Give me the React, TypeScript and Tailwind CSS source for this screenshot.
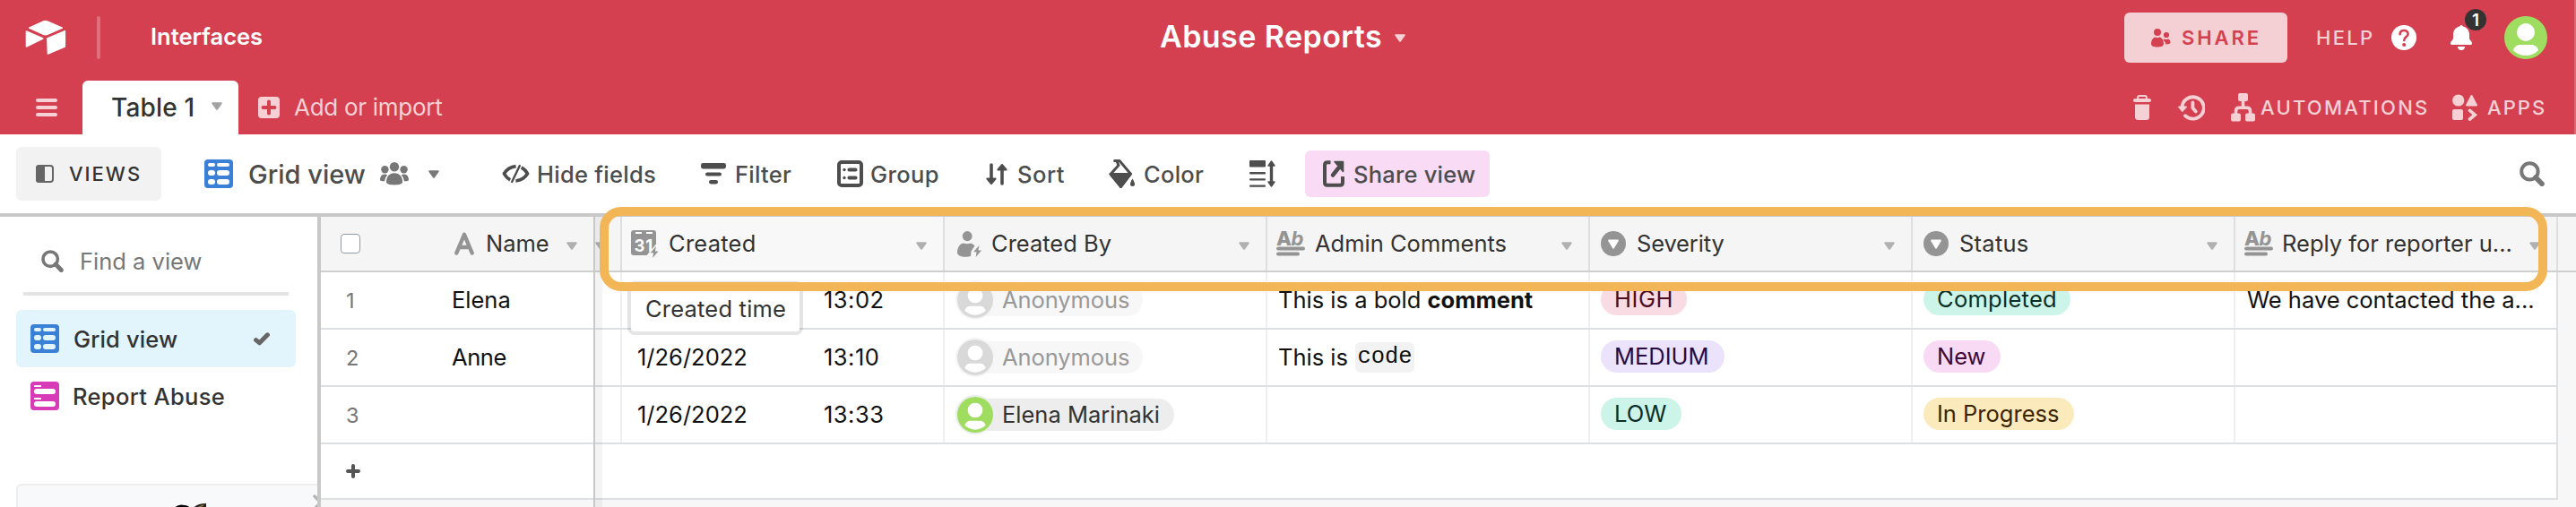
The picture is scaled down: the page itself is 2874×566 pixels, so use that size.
import type { ReactNode } from "react";

type IconProps = { className?: string };

const Caret = ({ className = "" }: IconProps) => (
  <svg className={`shrink-0 ${className}`} width="12" height="9" viewBox="0 0 12 9">
    <path d="M1.2 1.2H10.8L6 7.8Z" fill="currentColor" stroke="currentColor" strokeWidth="2" strokeLinejoin="round" />
  </svg>
);

const Logo = () => (
  <svg className="shrink-0" width="46" height="40" viewBox="0 0 46 40" fill="#fff" stroke="#fff" strokeWidth="1.4" strokeLinejoin="round">
    <path d="M4.6 9.2L20.6 2Q22.7 1 24.8 2L41.4 9.2L24.8 16.4Q22.7 17.2 20.6 16.4Z" />
    <path d="M1.4 13V30L19.8 21Z" />
    <path d="M44.4 12.6V30.2L25.4 38.2L24.8 21Z" />
  </svg>
);

const Avatar = ({ size, color }: { size: number; color: string }) => (
  <svg className="shrink-0" width={size} height={size} viewBox="0 0 48 48">
    <circle cx="24" cy="24" r="24" fill={color} />
    <circle cx="24" cy="18" r="10" fill="#fff" />
    <path d="M10 38.2C11 34.3 14 32 17.5 32H30.5C34 32 37 34.3 38 38.2C34.3 42 29.4 44 24 44C18.600 44 13.700 42 10 38.200Z" fill="#fff" />
  </svg>
);

const GridIcon = ({ hole = "#fff" }: { hole?: string }) => (
  <svg className="shrink-0" width="32" height="32" viewBox="0 0 32 32">
    <rect width="32" height="32" rx="4" fill="#3a80d6" />
    <g fill={hole}>
      <rect x="4" y="4" width="8" height="4" rx="2" /><rect x="14" y="4" width="14" height="4" rx="2" />
      <rect x="4" y="12" width="8" height="6" rx="3" /><rect x="14" y="12" width="14" height="6" rx="3" />
      <rect x="4" y="22" width="8" height="6" rx="3" /><rect x="14" y="22" width="14" height="6" rx="3" />
    </g>
  </svg>
);

const FormIcon = () => (
  <svg className="shrink-0" width="32" height="32" viewBox="0 0 32 32">
    <rect width="32" height="32" rx="4" fill="#d83bb7" />
    <g fill="#fff">
      <rect x="4" y="4" width="8" height="2" rx=".6" /><rect x="4" y="8" width="24" height="6" rx="3" />
      <rect x="4" y="18" width="8" height="2" rx=".6" /><rect x="4" y="22" width="24" height="6" rx="3" />
    </g>
  </svg>
);

const SearchIcon = ({ size }: { size: number }) => (
  <svg className="shrink-0 text-[#777]" width={size} height={size} viewBox="0 0 28 28" fill="none" stroke="currentColor">
    <circle cx="11.4" cy="11.4" r="9.200" strokeWidth="4" />
    <path d="M18 18L25 25.200" strokeWidth="5.600" strokeLinecap="round" />
  </svg>
);

const GroupPeople = () => (
  <svg className="shrink-0" width="32" height="26" viewBox="0 0 32 26" fill="#777">
    <circle cx="16" cy="5.300" r="5.200" />
    <circle cx="5.400" cy="8.200" r="4.200" /><circle cx="26.600" cy="8.200" r="4.200" />
    <path d="M7 22.500C7 16.500 10 12.300 16 12.300S25 16.500 25 22.500C25 24 22 25.400 16 25.400S7 24 7 22.500Z" />
    <path d="M0 20C0 16 2 13.800 5 13.600Q7 13.600 8.200 14.400C6.200 16.300 5.400 18.600 5.200 21.300C2 21.300 0 21 0 20Z" />
    <path d="M32 20C32 16 30 13.800 27 13.600Q25 13.600 23.800 14.400C25.800 16.300 26.600 18.600 26.800 21.300C30 21.300 32 21 32 20Z" />
  </svg>
);

const HideIcon = () => (
  <svg className="shrink-0" width="31" height="22" viewBox="0 0 31 22" fill="none" stroke="currentColor" strokeWidth="3.700" strokeLinecap="butt" strokeLinejoin="round">
    <path d="M15.600 2.600C8.500 3.400 5 6.500 2.400 10.800C4 13.600 5.800 15.800 9.200 17.800" />
    <path d="M15.400 19C22.500 18.200 26 15.100 28.600 10.800C27 8 25.200 5.800 21.800 3.800" />
    <path d="M19.800 2L11.200 20" strokeWidth="2.400" strokeLinecap="round" />
  </svg>
);

const FilterIcon = () => (
  <svg className="shrink-0" width="28" height="24" viewBox="0 0 28 24" fill="currentColor">
    <rect y="0" width="28" height="6.400" rx="2.400" /><rect x="5" y="10.400" width="18" height="4.200" rx="2.100" /><rect x="9" y="19" width="10" height="4.400" rx="2.100" />
  </svg>
);

const GroupIcon = () => (
  <svg className="shrink-0" width="29" height="30" viewBox="0 0 29 30" fill="currentColor">
    <rect x="2" y="2" width="25" height="26" rx="3" fill="none" stroke="currentColor" strokeWidth="4" />
    <circle cx="8" cy="10.500" r="1.700" /><circle cx="8" cy="19.500" r="1.700" />
    <rect x="11.500" y="8.500" width="11" height="4" rx="1.800" /><rect x="11.500" y="17.500" width="11" height="4" rx="1.800" />
  </svg>
);

const SortIcon = () => (
  <svg className="shrink-0" width="24" height="25" viewBox="0 0 24 25" fill="currentColor" stroke="currentColor" strokeLinecap="round" strokeLinejoin="round">
    <path d="M6 2V19" strokeWidth="3.600" /><path d="M1.400 17.500H10.600L6 23Z" strokeWidth="2" />
    <path d="M18 23V6" strokeWidth="3.600" /><path d="M13.400 7.500H22.600L18 2Z" strokeWidth="2" />
  </svg>
);

const ColorIcon = () => (
  <svg className="shrink-0" width="29" height="34" viewBox="0 0 29 34" fill="currentColor">
    <path d="M6.600 2.400H12L24.500 17.200L13.500 31.500L2 17.500L11 7.600L9.500 4" fill="none" stroke="currentColor" strokeWidth="3" strokeLinejoin="round" strokeLinecap="round" />
    <path d="M1.500 17H25L13.500 32Z" stroke="currentColor" strokeWidth="2" strokeLinejoin="round" />
    <path d="M26.500 22.500C28 25 29 27 29 28.600A2.500 2.500 0 0 1 24 28.600C24 27 25 25 26.500 22.500Z" />
  </svg>
);

const RowHeightIcon = () => (
  <svg className="shrink-0" width="29" height="30" viewBox="0 0 29 30" fill="currentColor">
    <rect y="0" width="18" height="7.600" rx="1" /><rect y="13" width="18" height="2.400" rx="1" /><rect y="20.200" width="18" height="2.400" rx="1" /><rect y="27.400" width="18" height="2.400" rx="1" />
    <path d="M24.500 4V26" stroke="currentColor" strokeWidth="3.400" />
    <path d="M24.500 1L28 6H21ZM24.500 29L28 24H21Z" stroke="currentColor" strokeWidth="1.400" strokeLinejoin="round" />
  </svg>
);

const ShareViewIcon = () => (
  <svg className="shrink-0" width="24" height="30" viewBox="0 0 24 30" fill="none" stroke="currentColor" strokeLinecap="butt" strokeLinejoin="round">
    <path d="M8.500 2.200H5Q2 2.200 2 5.200V25Q2 27.800 5 27.800H19Q22 27.800 22 25V18" strokeWidth="4" />
    <path d="M11 16.500L17 9" strokeWidth="4.500" strokeLinecap="round" /><path d="M13 1.500H22.500V12.500Z" fill="currentColor" strokeWidth="1.600" />
  </svg>
);

const ViewsIcon = () => (
  <svg className="shrink-0" width="20" height="20" viewBox="0 0 20 20">
    <rect x="1" y="1" width="18" height="18" rx="3" fill="none" stroke="#666" strokeWidth="2" />
    <path d="M3.500 0H10V20H3.500A3.500 3.500 0 0 1 0 16.500V3.500A3.500 3.500 0 0 1 3.500 0Z" fill="#666" />
  </svg>
);

const ShareIcon = () => (
  <svg className="shrink-0" width="22" height="21" viewBox="0 0 22 21" fill="currentColor">
    <circle cx="7" cy="4" r="4" /><circle cx="17" cy="7" r="3.100" />
    <path d="M0 17C0 12.500 2.500 9.500 5 9.500Q7 10.800 9 9.500C11.500 9.500 14 12.500 14 17C14 19.500 11 20.500 7 20.500S0 19.500 0 17Z" />
    <path d="M13.200 12.600Q14 11.600 15.200 11.400Q17 12.400 18.800 11.400C20.500 11.700 21.500 13.500 21.500 15.600C21.500 16.800 19.500 17.600 16.200 17.600Q16.200 14.600 13.200 12.600Z" />
  </svg>
);

const HelpIcon = () => (
  <svg className="shrink-0" width="28" height="28" viewBox="0 0 28 28">
    <circle cx="14" cy="14" r="14" fill="#fff" />
    <path d="M9.600 10.300C9.600 7.600 11.400 6 14 6S18.600 7.600 18.600 10C18.600 13 14.200 13.200 14.200 17" fill="none" stroke="#d4404f" strokeWidth="2.600" strokeLinecap="round" />
    <circle cx="14.200" cy="22" r="2.100" fill="#d4404f" />
  </svg>
);

const BellIcon = () => (
  <svg className="shrink-0" width="24" height="28" viewBox="0 0 24 28" fill="#fff">
    <path d="M12 0Q13.600 0 13.900 1.500C18.500 2.600 21 6.300 21 10.500V14.500C21 16.800 24 18 24 20.500Q24 22 22.500 22H1.500Q0 22 0 20.500C0 18 3 16.800 3 14.500V10.500C3 6.300 5.500 2.600 10.100 1.500Q10.400 0 12 0Z" />
    <path d="M7.800 24H16.200Q15.600 28 12 28T7.800 24Z" />
  </svg>
);

const TrashIcon = () => (
  <svg className="shrink-0" width="20" height="28" viewBox="0 0 20 28" fill="currentColor">
    <path d="M5.200 5V2.600Q5.200 1 6.800 1H13.200Q14.800 1 14.800 2.600V5" fill="none" stroke="currentColor" strokeWidth="2" />
    <rect y="4" width="20" height="4" rx="2" /><path d="M2 10.600H18V24.500Q18 28 14.500 28H5.500Q2 28 2 24.500Z" />
  </svg>
);

const HistoryIcon = () => (
  <svg className="shrink-0" width="30" height="29" viewBox="0 0 30 29" fill="none" stroke="currentColor" strokeLinecap="round" strokeLinejoin="round">
    <path d="M4.400 13.500A12.200 12.200 0 1 1 8 23.200" strokeWidth="3.800" />
    <path d="M1 13.500H9L4.800 18Z" fill="currentColor" strokeWidth="1.800" />
    <path d="M16.400 8.500V14.600L19.800 18.400" strokeWidth="3.800" />
  </svg>
);

const AutomationsIcon = () => (
  <svg className="shrink-0" width="28" height="32" viewBox="0 0 28 32" fill="currentColor">
    <rect x="8" y="0" width="11" height="9" rx="2" /><rect x="0" y="22.500" width="11" height="9" rx="2" /><rect x="16" y="22.500" width="11" height="9" rx="2" />
    <path d="M13.500 8V16M5.500 23V20Q5.500 16.300 9 16.300H18Q21.500 16.300 21.500 20V23" fill="none" stroke="currentColor" strokeWidth="3.600" />
  </svg>
);

const AppsIcon = () => (
  <svg className="shrink-0" width="29" height="30" viewBox="0 0 29 30" fill="currentColor">
    <circle cx="6.700" cy="7" r="6.600" /><path d="M21.500 2L27 12.400H16Z" stroke="currentColor" strokeWidth="2" strokeLinejoin="round" />
    <rect y="17" width="12" height="12" rx="2" />
    <path d="M19.500 18.400L25.200 23.200L19.500 28" fill="none" stroke="currentColor" strokeWidth="3.600" strokeLinecap="round" />
  </svg>
);

const Bolt = ({ x, y }: { x: number; y: number }) => (
  <path transform={`translate(${x} ${y})`} d="M6.500 0L0 7.200H3.600L2.600 13L9 5.600H5.400Z" fill="#949494" />
);

const CreatedTimeIcon = () => (
  <svg className="shrink-0 overflow-visible" width="31" height="32" viewBox="0 0 31 32">
    <path d="M3 0H25Q28 0 28 3V15.500L17.600 28H3Q0 28 0 25V3Q0 0 3 0Z" fill="#949494" />
    <path d="M5 3H12M17 3H24" stroke="#fff" strokeWidth="2" />
    <text x="3.600" y="23.500" fontFamily="Inter" fontWeight="700" fontSize="18.500" fill="#fff" textLength="21">31</text>
    <path d="M19 27L28 16V30H19Z" fill="#f8f8f8" />
    <Bolt x={21.500} y={18} />
  </svg>
);

const CreatedByIcon = () => (
  <svg className="shrink-0" width="28" height="30" viewBox="0 0 28 30">
    <ellipse cx="11.200" cy="5.600" rx="5.400" ry="5.600" fill="#949494" />
    <path d="M0 24C0 18 3.500 13.800 7 13.600Q11 15 15 13.600Q17.500 14 19.500 16.600L15.500 22.500L15 28Q12 29 9 28.800C4 28.600 0 27 0 24Z" fill="#949494" />
    <Bolt x={18} y={16} />
  </svg>
);

const RichTextIcon = () => (
  <svg className="shrink-0 overflow-visible" width="32" height="30" viewBox="0 0 32 30" fill="#949494">
    <text x="0" y="16.500" fontFamily="Inter" fontWeight="800" fontSize="22">A</text>
    <text x="16.500" y="16.500" fontFamily="Inter" fontStyle="italic" fontWeight="700" fontSize="22">b</text>
    <rect y="18.500" width="32" height="4" rx="2" /><rect y="24.500" width="26" height="4" rx="2" />
  </svg>
);

const SelectIcon = () => (
  <svg className="shrink-0" width="28" height="28" viewBox="0 0 28 28">
    <circle cx="14" cy="14" r="14" fill="#949494" />
    <path d="M9 10.500H19L14 18.800Z" fill="#fff" stroke="#fff" strokeWidth="1.800" strokeLinejoin="round" />
  </svg>
);

const TextFieldIcon = () => (
  <svg className="shrink-0" width="22" height="26" viewBox="0 0 22 26" fill="none" stroke="#949494" strokeWidth="4.400" strokeLinecap="round" strokeLinejoin="round">
    <path d="M2.300 23.500L11 2.800L19.700 23.500M5.500 17H16.500" />
  </svg>
);

const HeaderCell = ({ icon, label, className = "" }: { icon: ReactNode; label: string; className?: string }) => (
  <div className={`flex h-full w-[360px] shrink-0 items-center border-r-2 border-[#dce0e3] pr-[18px] text-[#333] ${className}`}>
    {icon}
    <span className="mt-px whitespace-nowrap">{label}</span>
    <Caret className="mt-1 ml-auto text-[#b0b0b0]" />
  </div>
);

const Cell = ({ children, last = false, className = "" }: { children?: ReactNode; last?: boolean; className?: string }) => (
  <div className={`flex h-full w-[360px] shrink-0 items-center border-r-2 whitespace-nowrap ${last ? "border-[#dce0e3]" : "border-[#f0f0f1]"} ${className}`}>{children}</div>
);

const Person = ({ name, anonymous = false }: { name: string; anonymous?: boolean }) => (
  <div className={`flex h-9 items-center rounded-full ${anonymous ? "bg-[#f7f7f7] pr-[15px] text-[#999]" : "bg-[#ededed] pr-4 text-[#333]"}`}>
    <span className={`mr-[8px] -ml-[2px] rounded-full border-2 ${anonymous ? "border-[#f5f5f5]" : "border-[#ececec]"}`}>
      <Avatar size={40} color={anonymous ? "#d9d9d9" : "#9fdd60"} />
    </span>
    <span className={anonymous ? "tracking-[-0.08px]" : ""}>{name}</span>
  </div>
);

const Tag = ({ children, className }: { children: ReactNode; className: string }) => (
  <span className={`mb-0.5 flex h-9 items-center rounded-full pl-[15px] ${className}`}>{children}</span>
);

type Row = { date?: string; time: string; person: ReactNode; comment?: ReactNode; severity: ReactNode; status: ReactNode; reply?: string };

const names = ["Elena", "Anne", ""];

const rows: Row[] = [
  {
    time: "13:02",
    person: <Person name="Anonymous" anonymous />,
    comment: <span>This is a bold <b className="font-bold">comment</b></span>,
    severity: <Tag className="w-[96px] bg-[#f9dbe3] tracking-[0.6px] text-[#4c0c1c]">HIGH</Tag>,
    status: <Tag className="w-[164px] bg-[#cdf4e8] tracking-[0.27px] text-[#0b2e26]">Completed</Tag>,
    reply: "We have contacted the a...",
  },
  {
    date: "1/26/2022",
    time: "13:10",
    person: <Person name="Anonymous" anonymous />,
    comment: (
      <span className="flex items-center">
        This is
        <code className="ml-[8px] flex h-[34px] w-[66px] items-center justify-center rounded-md bg-[#f2f2f2] pt-px font-['Liberation_Mono',monospace] text-[25.5px]">code</code>
      </span>
    ),
    severity: <Tag className="w-[138px] bg-[#ebe2fc] text-[#280b42]">MEDIUM</Tag>,
    status: <Tag className="w-[86px] bg-[#f9daf5] text-[#400832]">New</Tag>,
  },
  {
    date: "1/26/2022",
    time: "13:33",
    person: <Person name="Elena Marinaki" />,
    severity: <Tag className="w-[90px] bg-[#cdf4e8] text-[#0b2e26]">LOW</Tag>,
    status: <Tag className="w-[168px] bg-[#fbeabb] text-[#3b2501]">In Progress</Tag>,
  },
];

function TopBar() {
  return (
    <header className="flex h-[150px] shrink-0 flex-col border-r-2 border-[#dd6975] bg-[#d4404f] text-[#f5d1d5]">
      <div className="flex h-[84px] items-center text-white">
        <div className="flex w-[1294px] items-center pl-7">
          <Logo />
          <span className="ml-[34px] h-12 w-1 rounded-full bg-white/25" />
          <span className="-mt-0.5 ml-[56px] text-[25.5px] font-semibold">Interfaces</span>
        </div>
        <h1 className="-mt-0.5 w-[262px] text-[34px] leading-none font-semibold tracking-[0.44px] whitespace-nowrap">Abuse Reports</h1>
        <Caret className="text-[#f5d1d5]" />
        <div className="ml-auto flex items-center pr-[30px]">
          <div className="flex h-14 w-[182px] items-center rounded-md bg-[#f4d0d4] pl-[30px] text-[22px] font-semibold tracking-[2.9px] text-[#d4404f]">
            <ShareIcon />
            <span className="ml-[12px]">SHARE</span>
          </div>
          <span className="ml-8 w-[84px] text-[22px] font-medium tracking-[2.3px] text-[#f5d1d5]">HELP</span>
          <HelpIcon />
          <div className="relative mr-9 ml-[38px]">
            <BellIcon />
            <span className="absolute -top-[18px] left-4 flex size-6 items-center justify-center rounded-full bg-[#333] text-[19px] leading-none font-semibold">1</span>
          </div>
          <Avatar size={48} color="#9fdd60" />
        </div>
      </div>
      <div className="mt-1.5 flex h-[60px] items-center">
        <div className="mr-7 ml-10 flex w-6 flex-col gap-1">
          <i className="h-1 rounded-full bg-[#f5d1d5]" />
          <i className="h-1 rounded-full bg-[#f5d1d5]" />
          <i className="h-1 rounded-full bg-[#f5d1d5]" />
        </div>
        <div className="flex h-full w-[174px] items-center rounded-t-md bg-white pl-[32px] text-[#333]">
          <span className="w-[112px] text-[28px] font-medium tracking-[0.2px] whitespace-nowrap">Table 1</span>
          <Caret className="-mt-1 text-[#a3a3a3]" />
        </div>
        <svg className="ml-[22px]" width="24" height="24" viewBox="0 0 24 24">
          <rect width="24" height="24" rx="4" fill="#f5d1d5" />
          <path d="M12 5.500V18.500M5.500 12H18.500" stroke="#d4404f" strokeWidth="4" strokeLinecap="round" />
        </svg>
        <span className="-mt-0.5 ml-4 text-[26px] tracking-[-0.28px]">Add or import</span>
        <div className="ml-auto flex w-[492px] items-center text-[22px] font-medium">
          <TrashIcon />
          <span className="ml-[30px] w-[59px]"><HistoryIcon /></span>
          <AutomationsIcon />
          <span className="ml-[5px] w-[214px] tracking-[2.240px]">AUTOMATIONS</span>
          <AppsIcon />
          <span className="ml-[10px] tracking-[2.060px]">APPS</span>
        </div>
      </div>
    </header>
  );
}

function Toolbar() {
  return (
    <div className="flex h-[92px] shrink-0 items-center border-b-4 border-[#c8c8c8] pl-[18px] text-[25.5px] font-medium whitespace-nowrap text-[#4d4d4d]">
      <div className="mr-12 flex h-[60px] w-[162px] items-center rounded-md bg-[#f2f2f2] pl-[22px] text-[22px] tracking-[2px] text-[#333]">
        <ViewsIcon />
        <span className="ml-[17px]">VIEWS</span>
      </div>
      <GridIcon />
      <span className="mt-0.5 ml-[17px] w-[147px] text-[29px]">Grid view</span>
      <GroupPeople />
      <Caret className="mr-[70px] ml-[22px] text-[#7a7a7a]" />
      <HideIcon />
      <span className="mt-0.5 ml-[8px] w-[183px] tracking-[0.27px]">Hide fields</span>
      <FilterIcon />
      <span className="mt-0.5 ml-[10px] w-[114px] tracking-[0.27px]">Filter</span>
      <GroupIcon />
      <span className="mt-0.5 ml-[8px] w-[129px] tracking-[0.4px]">Group</span>
      <SortIcon />
      <span className="mt-0.5 ml-[11px] w-[102px] tracking-[0.5px]">Sort</span>
      <ColorIcon />
      <span className="mt-0.5 ml-[10px] w-[118px] tracking-[0.27px]">Color</span>
      <RowHeightIcon />
      <div className="ml-[33px] flex h-[52px] w-[206px] items-center rounded-md bg-[#f9dbf5] pl-5">
        <ShareViewIcon />
        <span className="mt-0.5 ml-[10px] tracking-[0.2px]">Share view</span>
      </div>
      <span className="mr-[35px] ml-auto"><SearchIcon size={28} /></span>
    </div>
  );
}

function Sidebar() {
  return (
    <aside className="flex w-[358px] shrink-0 flex-col overflow-hidden border-r-4 border-[#c8c8c8] pl-[18px] text-[25.5px]">
      <div className="mt-[15px] ml-2 flex h-[73px] w-[296px] shrink-0 items-center border-b-4 border-[#e3e3e3] pl-5 text-[#777]">
        <SearchIcon size={25} />
        <span className="mt-0.5 ml-[18px]">Find a view</span>
      </div>
      <div className="mt-4 flex h-16 w-[312px] shrink-0 items-center rounded-md bg-[#e2f4fc] pl-4 font-medium text-[#333]">
        <GridIcon hole="#e2f4fc" />
        <span className="mt-0.5 ml-4 w-[201px] tracking-[0.14px]">Grid view</span>
        <svg width="18" height="15" viewBox="0 0 18 15" fill="none" stroke="#666" strokeWidth="5" strokeLinecap="round" strokeLinejoin="round">
          <path d="M2.600 8.600L6.600 11.800L15.400 2.800" />
        </svg>
      </div>
      <div className="flex h-16 w-[312px] shrink-0 items-center pl-4 font-medium text-[#333]">
        <FormIcon />
        <span className="mt-0.5 ml-[15px] tracking-[0.35px]">Report Abuse</span>
      </div>
      <div className="mt-[66px] h-10 w-[360px] shrink-0 rounded-tl-md border-2 border-[#eee] bg-[#f7f9fb]">
        <svg className="ml-[174px]" width="166" height="26" viewBox="0 0 166 26">
          <path d="M0 26Q4 20 12 22Q16 22 19 26Z" fill="#000" />
          <path d="M21 26Q25 20 36 20V26Z" fill="#222" /><path d="M26 25L33 22" stroke="#8a7433" strokeWidth="1.500" />
          <path d="M157 12L171 26M171 12L157 26" stroke="#b5b5b5" strokeWidth="3.500" strokeLinecap="round" />
        </svg>
      </div>
    </aside>
  );
}

function Grid() {
  return (
    <main className="relative flex flex-1 bg-[#f7f7f7] text-[25.5px] text-[#111]">
      <div className="flex w-[306px] shrink-0 flex-col border-r-2 border-[#c8c8c8]">
        <div className="flex h-[62px] items-center border-b-2 border-[#cfcfcf] bg-[#f5f5f5] pl-[22px]">
          <span className="size-[22px] rounded border-[1.500px] border-[#8f9ba5] bg-white" />
          <span className="mr-[13px] ml-[105px]"><TextFieldIcon /></span>
          <span className="mt-px w-[90px] text-[#333]">Name</span>
          <Caret className="mt-1 text-[#b0b0b0]" />
        </div>
        {names.map((name, i) => (
          <div key={i} className="flex h-16 items-center border-b-2 border-[#dce0e3] bg-white pl-[28px]">
            <span className="mt-0.5 w-[118px] text-[23.500px] text-[#777]">{i + 1}</span>
            <span className={name === "Anne" ? "tracking-[-0.4px]" : ""}>{name}</span>
          </div>
        ))}
        <div className="flex h-[62px] items-center border-b-2 border-[#dce0e3] bg-white pl-[28px]">
          <svg width="16" height="16" viewBox="0 0 16 16" stroke="#555" strokeWidth="4" strokeLinecap="round">
            <path d="M8 2V14M2 8H14" />
          </svg>
        </div>
      </div>
      <div className="flex flex-1 flex-col">
        <div className="flex h-[62px] items-center border-b-2 border-[#cfcfcf] bg-[#f5f5f5]">
          <div className="flex h-full w-[30px] shrink-0 items-center border-r-2 border-[#dce0e3]">
            <Caret className="mt-1 text-[#b0b0b0]" />
          </div>
          <HeaderCell className="bg-[#f8f8f8] tracking-[0.25px]" label="Created" icon={<span className="mt-0.5 mr-[11px] ml-[10px]"><CreatedTimeIcon /></span>} />
          <HeaderCell label="Created By" icon={<span className="mt-0.5 mr-[10px] ml-[14px]"><CreatedByIcon /></span>} />
          <HeaderCell label="Admin Comments" icon={<span className="mr-[11px] ml-[10px]"><RichTextIcon /></span>} />
          <HeaderCell className="tracking-[-0.15px]" label="Severity" icon={<span className="mr-[12px] ml-[12px]"><SelectIcon /></span>} />
          <HeaderCell className="tracking-[0.25px]" label="Status" icon={<span className="mr-[12px] ml-[12px]"><SelectIcon /></span>} />
          <HeaderCell label="Reply for reporter u..." icon={<span className="mr-[10px] ml-[10px]"><RichTextIcon /></span>} />
        </div>
        {rows.map((row, i) => (
          <div key={i} className="flex h-16 w-[2190px] items-center border-b-2 border-[#dce0e3] bg-white">
            <div className="h-full w-[30px] shrink-0 border-r-2 border-[#f0f0f1]" />
            <Cell className="pl-[17px]">
              <span className="w-[208px]">{row.date}</span>
              <span className="tracking-[0.5px]">{row.time}</span>
            </Cell>
            <Cell className="pl-[14px]">{row.person}</Cell>
            <Cell className="pl-[12px]">{row.comment}</Cell>
            <Cell className="pl-[12px]">{row.severity}</Cell>
            <Cell className="pl-[12px]">{row.status}</Cell>
            <Cell last className="pl-[13px]">{row.reply}</Cell>
          </div>
        ))}
        <div className="h-[62px] w-[2190px] border-r-2 border-b-2 border-[#dce0e3] bg-white" />
      </div>
      <div className="absolute inset-y-0 left-[306px] w-2 bg-black/[0.045]" />
      <div className="absolute top-[72px] left-[342px] flex h-[60px] w-[196px] items-center rounded-lg border-4 border-black/10 bg-white bg-clip-padding pt-0.5 pl-[16px] tracking-[0.2px] whitespace-nowrap text-[#333]">
        Created time
      </div>
      <div className="absolute -top-[11px] left-[311px] h-[94px] w-[2173px] rounded-[24px] border-10 border-[#f3b657]" />
    </main>
  );
}

export default function App() {
  return (
    <div className="flex h-[566px] w-[2874px] flex-col overflow-hidden bg-white font-['Inter',sans-serif]">
      <TopBar />
      <Toolbar />
      <div className="flex h-[324px]">
        <Sidebar />
        <Grid />
      </div>
    </div>
  );
}
